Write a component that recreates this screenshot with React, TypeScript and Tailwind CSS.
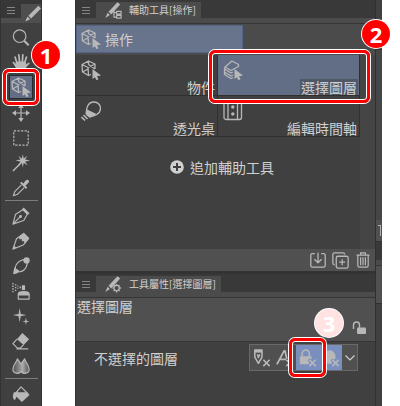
import React from 'react';
import clsx from 'clsx';

interface IconProps {
  className?: string;
  children?: React.ReactNode;
}

const Icon: React.FC<IconProps> = ({ className = 'size-5', children }) => (
  <svg
    viewBox="0 0 20 20"
    className={clsx('shrink-0 text-[#b8b8b8]', className)}
    fill="none"
    stroke="currentColor"
    strokeWidth="1.3"
    strokeLinejoin="round"
    aria-hidden="true"
  >
    {children}
  </svg>
);

const cursor = <path d="M11.500 9v10l2.400-1.800 1.600 3 2-1-1.500-3 4-.7z" fill="currentColor" stroke="none" />;

const CubeIcon = () => (
  <Icon>
    <path d="M10 14.500l-2.500 1L1.500 12 1 4.500 7.500 1l6.500 3v5M1 4.500l6 3 7-3.500M7 7.500l.5 8M7.500 1v3.500M1.500 12l5.500-3M7.500 4.500L14 9" />
    {cursor}
  </Icon>
);

const LayersIcon = () => (
  <Icon>
    <path d="M2 7L9 1l6.500 3.500V6.500L8 10.500zM2 7l-.5 2L8 13l2-1M1.500 9v3L8 16l2-1M1.500 12v2.500L8 18.500l2-1" />
    {cursor}
  </Icon>
);

const BulbIcon = () => (
  <Icon>
    <path d="M5.500 13.500C5 10 5.500 1 13 1c4 0 6.500 3 6.500 6.500 0 5.500-5 7-11 8.500z" />
    <path d="M6 8.500L15.500 13c-2 1.500-5 2-7 3L4.500 12.500z" fill="currentColor" stroke="none" />
    <path d="M2.500 14l4 4M.5 16l3.500 3.500" strokeWidth="1.600" />
  </Icon>
);

const TimelineIcon = () => (
  <Icon>
    <rect x="1" y="1" width="17.500" height="17.500" rx="2" />
    <path d="M5 1v17.500M14.500 1v17.500" />
    <g fill="currentColor" stroke="none">
      <circle cx="9.800" cy="6" r="1.700" />
      <circle cx="9.800" cy="13" r="1.700" />
    </g>
  </Icon>
);

const PencilIcon = ({ badge }: { badge?: 'tree' | 'gear' }) => (
  <Icon className="size-[18px]">
    <path d="M15 1.500L18 4 8 15l-3-3zM4 13l2.500 2.500L1.500 19z" fill="currentColor" stroke="none" />
    {badge === 'tree' && <path d="M11 9v9h3M11 13h3M14 11.500h5v3h-5zM14 16h5v3h-5z" />}
    {badge === 'gear' && (
      <g>
        <circle cx="14" cy="14.500" r="3" />
        <path d="M14 10v1.500M14 17.500V19.500M9.500 14.500H11M17 14.500h2M10.800 11.300l1 1M16.200 16.700l1 1M10.800 17.700l1-1M16.200 12.300l1-1" strokeWidth="1.600" />
      </g>
    )}
  </Icon>
);

const icons = {
  zoom: (
    <>
      <circle cx="8.500" cy="8" r="7" />
      <path d="M13.500 13l5 5" strokeWidth="2.200" />
    </>
  ),
  hand: (
    <>
      <path d="M5.500 10L3.500 3.500M8.500 9L7.500 1M11.500 9l.5-8M14 10l2-6.500M5 14L1.500 9.500M15 14l3.500-3.500" strokeWidth="1.900" strokeLinecap="round" />
      <path d="M5 9h9.500l1.500 4-3 5H7l-3.500-5z" fill="currentColor" />
    </>
  ),
  move: (
    <>
      <path d="M10 3v14M3 10h14" />
      <path d="M0 10l4.500-3v6zM20 10l-4.500-3v6zM10 0L7 4.500h6zM10 20l-3-4.500h6z" fill="currentColor" stroke="none" />
    </>
  ),
  marquee: <rect x="2" y="2" width="16" height="16" strokeDasharray="2.500 1.500" />,
  wand: (
    <>
      <path d="M1 19l9-9" strokeWidth="1.600" />
      <path d="M12 0l1 5 4-3-2.500 4 5.500 1-5.500 1.500 3 4-4.500-2.500-1 5-1-5-4.500 2.500 3-4L4 7l5.500-1L7 2l4 3z" fill="currentColor" stroke="none" />
    </>
  ),
  dropper: (
    <>
      <path d="M10.500 6.500L3 14l-1.500 4.500L6 17l7.500-7.500" />
      <path d="M9 4.500l1.500-1.500 2 2 3-3.500c2-2 4.500.5 3 2.500l-3.500 3.500 2 2-1.500 1.500z" fill="currentColor" stroke="none" />
    </>
  ),
  pen: (
    <>
      <path d="M1 19l3-11 8-5 5 5-4 7zM1.500 18.500L9 11" />
      <circle cx="9.500" cy="10.500" r="1" fill="currentColor" />
      <path d="M11 2.500L13 .5 19.500 7l-2 2z" fill="currentColor" stroke="none" />
    </>
  ),
  pencil: (
    <>
      <path d="M1 19L5 7.500l8-6 5.500 5.500-6 7.500z" />
      <path d="M7.500 6L13 1l6 6-4.500 6-1.500-3-2 .5V8L8.500 8zM1 19l1.200-4 2.800 2.500z" fill="currentColor" stroke="none" />
    </>
  ),
  brush: (
    <>
      <path d="M3.500 13c0-5 4-9 9.500-10l4 4c-1 6-4 9-9 9.500" />
      <path d="M1 19c1-2 .5-5 2-8 1.500 3 4 2 5.500 5-2 2.500-5 2.500-7.500 3z" fill="currentColor" stroke="none" />
      <circle cx="16.200" cy="3.800" r="3.500" fill="currentColor" stroke="none" />
    </>
  ),
  airbrush: (
    <>
      <path d="M7 19v-6c1-3 11-3 12 0v6z" />
      <path d="M6.500 15c0-6 13-6 13 0zM11 3.500h3.500V9H11zM8.500 5h1.500v2H8.500z" fill="currentColor" stroke="none" />
      <path d="M1 1v11M4 2.500v8" strokeDasharray="1.500 1.500" strokeWidth="1.600" />
      <path d="M6.500 4v5" strokeDasharray="1 1.500" />
    </>
  ),
  sparkle: (
    <path
      d="M8.500 1l1.200 6.800 6.300 1.200-6.300 1.200-1.200 6.800-1.200-6.800L1 9l6.300-1.200zM15.500 12l.8 3.200 3.200.8-3.200.8-.8 3.200-.8-3.200-3.200-.8 3.200-.8z"
      fill="currentColor"
      stroke="none"
    />
  ),
  eraser: (
    <>
      <path d="M5.500 8L1 13l5 5h3l4-4M5 18.700h13" />
      <path d="M5.500 8l6-7L19 8l-6 6.500z" fill="currentColor" stroke="none" />
    </>
  ),
  blend: (
    <>
      <defs>
        <linearGradient id="blend-fill">
          <stop offset="0" stopColor="#505050" />
          <stop offset="0.6" stopColor="#aaaaaa" />
          <stop offset="1" stopColor="#505050" />
        </linearGradient>
      </defs>
      <path d="M6 2c1 2.500 3 4 4 6 1-2 3-3.500 4-6 1 4 5 7 5 11.500 0 5-7 6-9 2.500-2 3.500-9 2.500-9-2.500C1 9 5 6 6 2z" fill="url(#blend-fill)" />
    </>
  ),
  fill: (
    <>
      <path d="M4 9l6-7 8 8M6 6.500V9" />
      <path d="M2 8h14.500l3 3-8.500 8-6-6-1.500 3.500C2 17 1 15 1 12z" fill="currentColor" stroke="none" />
    </>
  ),
};

const tools: { name: string; icon: React.ReactNode; dividerAfter?: boolean }[] = [
  { name: 'Zoom', icon: icons.zoom },
  { name: 'Hand', icon: icons.hand },
  { name: 'Operation', icon: null },
  { name: 'Move layer', icon: icons.move },
  { name: 'Selection', icon: icons.marquee },
  { name: 'Auto select', icon: icons.wand },
  { name: 'Eyedropper', icon: icons.dropper, dividerAfter: true },
  { name: 'Pen', icon: icons.pen },
  { name: 'Pencil', icon: icons.pencil },
  { name: 'Brush', icon: icons.brush },
  { name: 'Airbrush', icon: icons.airbrush },
  { name: 'Decoration', icon: icons.sparkle },
  { name: 'Eraser', icon: icons.eraser },
  { name: 'Blend', icon: icons.blend, dividerAfter: true },
  { name: 'Fill', icon: icons.fill },
];

const Highlight = ({ className }: { className: string }) => (
  <span
    className={clsx(
      'pointer-events-none absolute rounded-md border-3 border-[#ff0000] shadow-[inset_0_0_0_1px_white,0_0_0_1px_white]',
      className
    )}
  />
);

const StepBadge = ({ step, className }: { step: number; className: string }) => (
  <span
    className={clsx(
      "flex size-7 items-center justify-center rounded-full font-['Noto_Sans'] text-[22px] leading-7 font-bold text-white ring-1 ring-white",
      className
    )}
  >
    {step}
  </span>
);

const MenuButton = () => (
  <button className="flex w-5 shrink-0 flex-col items-center gap-[2px] pt-[7px]" aria-label="Menu">
    <span className="h-px w-2 bg-[#858585]" />
    <span className="h-px w-2 bg-[#858585]" />
    <span className="h-px w-2 bg-[#858585]" />
  </button>
);

const ToolBar = () => (
  <nav className="w-[42px] shrink-0 border-x border-[#333333] bg-[#404040]">
    <div className="flex h-[18px] bg-[#373737]">
      <MenuButton />
      <div className="mt-1 flex flex-1 items-start justify-end bg-[#4e4e4e]">
        <Icon className="size-[18px]">
          <path d="M17 2l3 3L9 16l-3-3zM5 14l3 3-5.500 2.500z" fill="currentColor" stroke="none" />
        </Icon>
      </div>
    </div>
    <div className="h-[5px] bg-[#4e4e4e]" />
    <ul className="flex flex-col items-center pt-0.5">
      {tools.map((tool) => (
        <li key={tool.name} className="flex w-full flex-col items-center">
          {tool.icon ? (
            <button className="flex h-[25px] w-full items-center justify-center" aria-label={tool.name}>
              <Icon className="size-[18px]">{tool.icon}</Icon>
            </button>
          ) : (
            <button
              className="relative z-10 mb-px flex size-6 items-center justify-center border border-[#252a35] bg-[#626d86]"
              aria-label={tool.name}
            >
              <CubeIcon />
              <Highlight className="-inset-[7px]" />
              <StepBadge step={1} className="absolute -top-[35px] left-[22px] bg-[#ff0000]" />
            </button>
          )}
          {tool.dividerAfter && <span className="mb-0.5 h-px w-[33px] bg-[#7c7c7c]" />}
        </li>
      ))}
    </ul>
  </nav>
);

const PanelHeader = ({ title, badge }: { title: string; badge: 'tree' | 'gear' }) => (
  <header className="border-b border-[#353535] bg-[#393939]">
    <div className="flex h-[18px] items-stretch">
      <MenuButton />
      <div className="mt-0.5 flex items-center gap-[7px] bg-[#4b4b4b] pr-[5px] pl-2">
        <PencilIcon badge={badge} />
        <h2 className="text-[10px] leading-4 whitespace-nowrap">{title}</h2>
      </div>
    </div>
    <div className="h-[5px] bg-[#4b4b4b]" />
  </header>
);

interface SubToolProps {
  label: string;
  icon: React.ReactNode;
  selected?: boolean;
}

const SubTool = ({ label, icon, selected }: SubToolProps) => (
  <button
    className={clsx(
      'flex h-[41px] flex-col justify-between border-r border-b border-[#303030] pt-[5px] pr-px pl-[5px]',
      selected && 'relative z-10 bg-[#626d86]'
    )}
  >
    {icon}
    <span className={clsx('-mt-1.5 self-end px-px text-sm leading-4', selected && 'bg-[#505868]')}>{label}</span>
    {selected && (
      <>
        <Highlight className="-top-[5px] -right-[11px] -bottom-2 -left-[9px]" />
        <StepBadge step={2} className="absolute -top-[35px] -right-[31px] bg-[#ff0000]" />
      </>
    )}
  </button>
);

const SubToolPanel = () => (
  <section>
    <PanelHeader title="輔助工具[操作]" badge="tree" />
    <div className="bg-[#4b4b4b] pt-px">
      <button className="flex h-7 w-[56%] items-center gap-1 border border-[#53648a] bg-[#68738c] pl-1 text-sm leading-5">
        <CubeIcon />
        操作
      </button>
      <div className="h-0.5" />
    </div>
    <div className="flex h-[194px] bg-[#404040]">
      <div className="flex flex-1 flex-col">
        <div className="grid grid-cols-2">
          <SubTool label="物件" icon={<CubeIcon />} />
          <SubTool label="選擇圖層" icon={<LayersIcon />} selected />
          <SubTool label="透光桌" icon={<BulbIcon />} />
          <SubTool label="編輯時間軸" icon={<TimelineIcon />} />
        </div>
        <button className="mx-auto mt-5 flex items-center gap-1.5 pl-2 text-sm leading-5">
          <svg viewBox="0 0 14 14" className="size-3.5" aria-hidden="true">
            <circle cx="7" cy="7" r="6.800" fill="#d0d0d0" />
            <path d="M7 3v8M3 7h8" stroke="#404040" strokeWidth="2" />
          </svg>
          追加輔助工具
        </button>
      </div>
      <div className="w-[15px] bg-[#454545]" />
    </div>
    <footer className="flex h-[22px] items-center justify-end gap-[6px] bg-[#505050] pr-1">
      <button aria-label="Import sub tool">
        <Icon className="size-4">
          <path d="M6 2H3a2 2 0 0 0-2 2v13a2 2 0 0 0 2 2h14a2 2 0 0 0 2-2V4a2 2 0 0 0-2-2h-3M10 1v12M5.500 9l4.500 4.500L14.500 9" strokeWidth="1.600" />
        </Icon>
      </button>
      <button aria-label="Duplicate sub tool">
        <Icon className="size-[17px]">
          <rect x="5" y="5" width="14" height="14" rx="2" strokeWidth="1.500" />
          <path d="M3 15a2 2 0 0 1-2-2V3a2 2 0 0 1 2-2h10a2 2 0 0 1 2 2M12 8.500v7M8.500 12h7" strokeWidth="1.500" />
        </Icon>
      </button>
      <button aria-label="Delete sub tool">
        <Icon className="size-4">
          <path d="M2 4h16M7 4V1h6v3M3.500 4v13a2 2 0 0 0 2 2h9a2 2 0 0 0 2-2V4M7 6.500v10M10 6.500v10M13 6.500v10" strokeWidth="1.500" />
        </Icon>
      </button>
    </footer>
  </section>
);

const cross = <path d="M11.500 12l7 7M18.500 12l-7 7" strokeWidth="1.800" />;

const ToolPropertyPanel = () => (
  <section className="flex flex-1 flex-col">
    <div className="h-[3px] bg-[#333333]" />
    <PanelHeader title="工具屬性[選擇圖層]" badge="gear" />
    <div className="flex h-11 justify-between border-b border-[#353535] bg-[#505050] pr-[9px] pl-px">
      <p className="text-sm leading-4">選擇圖層</p>
      <div className="flex items-start gap-[9px] pt-[11px]">
        <StepBadge step={3} className="bg-[#ffe2e2]" />
        <button className="mt-3" aria-label="Lock">
          <svg viewBox="0 0 14 14" className="size-3.5" fill="none" aria-hidden="true">
            <path d="M1.500 8V4a3 3 0 0 1 6 0v3" stroke="#b8b8b8" strokeWidth="1.400" />
            <rect x="5" y="6.500" width="9" height="6.500" rx="1" fill="#b8b8b8" />
          </svg>
        </button>
      </div>
    </div>
    <div className="flex flex-1 items-start justify-between bg-[#404040] pt-0.5 pr-[17px] pl-[18px]">
      <span className="text-sm leading-7">不選擇的圖層</span>
      <div className="flex h-[27px] border border-[#696969] bg-[#505050]">
        <button className="flex w-[23px] items-center justify-center" aria-label="Draft layer">
          <Icon className="size-[18px]">
            <path d="M2 1h8v8l-4 7-4-7zM5 6l1 3.500L7.500 6" strokeWidth="1.700" />
            <path d="M2 1h8v3H2z" fill="currentColor" stroke="none" />
            {cross}
          </Icon>
        </button>
        <button className="flex w-[23px] items-center justify-center" aria-label="Text layer">
          <Icon className="size-[18px]">
            <path d="M1 17L9 2h1l2 9M4.500 11.500H11" strokeWidth="2" />
            {cross}
          </Icon>
        </button>
        <button className="relative z-10 flex w-[23px] items-center justify-center bg-[#7a8fbe]" aria-label="Locked layer">
          <Icon className="size-[18px]">
            <path d="M3.500 8V5a4 4 0 0 1 8 0v3" strokeWidth="1.700" />
            <path d="M1 8h13v3l-2.500-.5-2 2 2 3L10 17H1z" fill="currentColor" stroke="none" />
            {cross}
          </Icon>
          <Highlight className="-inset-[7px]" />
        </button>
        <button className="flex w-[23px] items-center justify-center bg-[#7a8fbe]" aria-label="Masked layer">
          <Icon className="size-[18px]">
            <path d="M8 1.500a7 7 0 0 1 7 8.500l-1.500 2-2-1.500-2 2 2 3-1.500 1A7.200 7.200 0 1 1 8 1.500z" fill="currentColor" stroke="none" />
            {cross}
          </Icon>
        </button>
        <button className="flex w-[15px] items-center justify-center" aria-label="More">
          <svg viewBox="0 0 10 6" className="w-2.5" fill="none" stroke="currentColor" aria-hidden="true">
            <path d="M.5.5L5 5 9.500.5" strokeWidth="1.200" />
          </svg>
        </button>
      </div>
    </div>
  </section>
);

// Sliver of the neighbouring palette
const DockEdge = () => (
  <div className="flex w-[7px] shrink-0 flex-col border-l border-[#303030] bg-[#404040]">
    <div className="h-[50px] border-b border-[#333333]" />
    <div className="h-[170px] bg-[#464646]" />
    <div className="flex h-[22px] justify-center border-b border-[#333333] bg-[#505050]">
      <span className="mt-[5px] h-[11px] w-[3px] border-t border-r border-[#b0b0b0]" />
    </div>
    <div className="h-[18px] bg-[#393939]" />
    <div className="h-[6px] border-b border-[#353535] bg-[#4b4b4b]" />
    <div className="h-[38px] border-b border-[#303030] bg-[#505050]" />
  </div>
);

export default function App() {
  return (
    <div className="flex min-h-screen bg-white pr-[18px] font-['Noto_Sans_CJK_TC',sans-serif] text-[#d0d0d0]">
      <ToolBar />
      <main className="ml-[33px] flex min-w-0 flex-1">
        <div className="flex min-w-0 flex-1 flex-col border-l border-[#353535]">
          <SubToolPanel />
          <ToolPropertyPanel />
        </div>
        <DockEdge />
      </main>
    </div>
  );
}
